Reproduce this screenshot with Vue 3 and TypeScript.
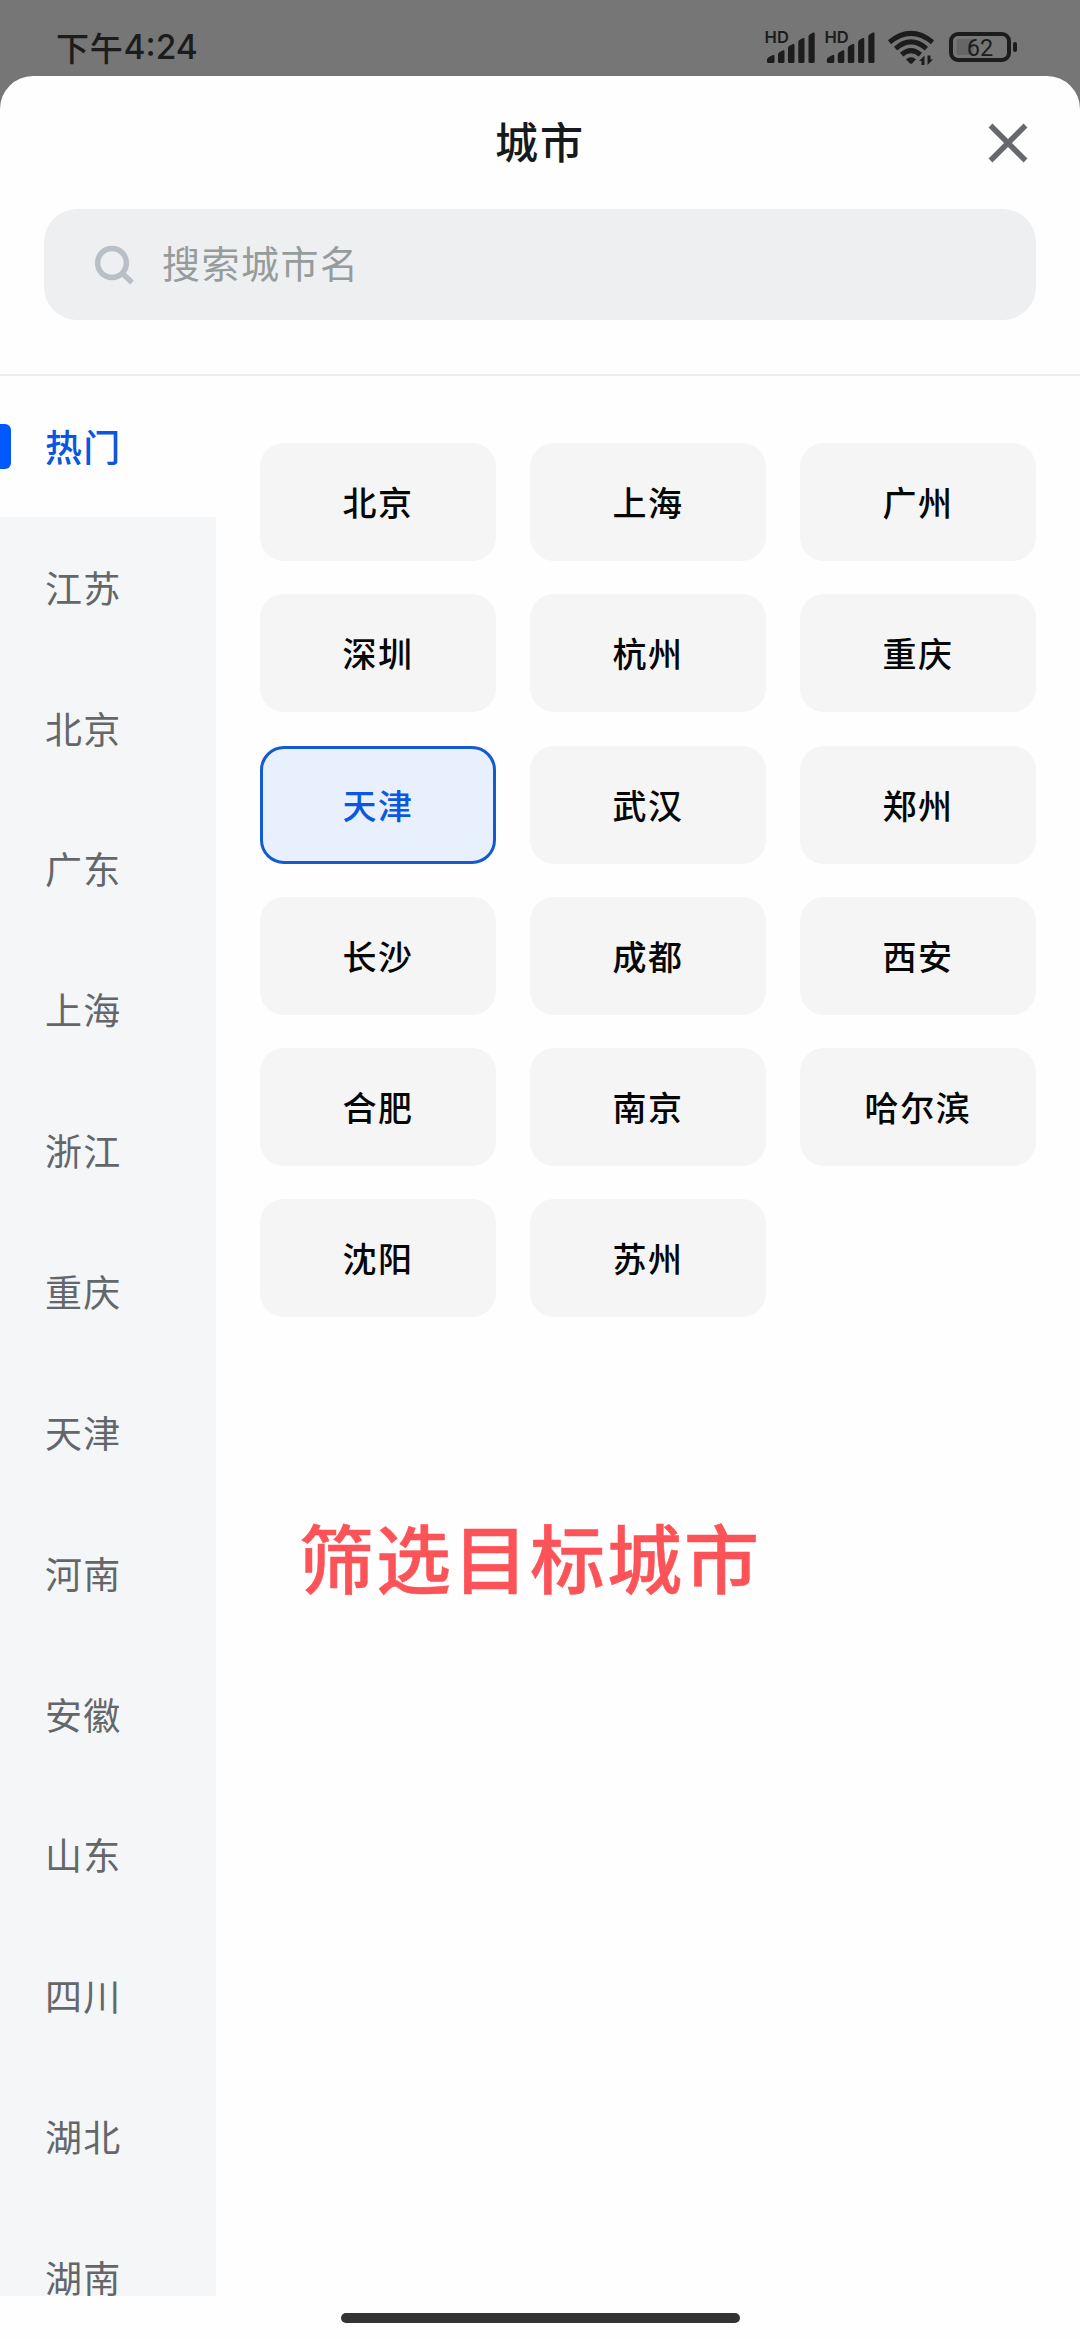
<script setup lang="ts">
import { ref } from 'vue'

const provinces: string[] = [
  '热门', '江苏', '北京', '广东', '上海', '浙江', '重庆',
  '天津', '河南', '安徽', '山东', '四川', '湖北', '湖南',
]
const cities: string[] = [
  '北京', '上海', '广州', '深圳', '杭州', '重庆', '天津', '武汉', '郑州',
  '长沙', '成都', '西安', '合肥', '南京', '哈尔滨', '沈阳', '苏州',
]
const activeProvince = ref('热门')
const activeCity = ref('天津')
</script>

<template>
  <div class="screen">
    <header class="status">
      <span class="time">下午<b>4:24</b></span>
      <svg class="indicators" width="260" height="48" viewBox="760 24 260 48">
        <g v-for="i in 2" :key="i" :transform="`translate(${(i - 1) * 59.8} 0)`">
          <text class="hd" x="764.6" y="42.8">HD</text>
          <path
            d="M767 60q0-2 2-3l4-2q1.500-.5 1.500 1v5.500q0 1.500-1.500 1.500h-4.500q-1.500 0-1.500-1.500z
               M778 54.500q0-1.500 1.500-2.200l3.500-2q1.500-.5 1.500 1v10.200q0 1.500-1.500 1.500h-3.500q-1.500 0-1.500-1.500z
               M788 48q0-1.500 1.500-2.200l3.500-1.800q1.500-.5 1.500 1v16.500q0 1.500-1.500 1.500h-3.500q-1.500 0-1.500-1.500z
               M798.300 42q0-1.500 1.500-2.200l3.200-1.700q1.500-.5 1.500 1v22.400q0 1.500-1.500 1.500h-3.200q-1.500 0-1.500-1.500z
               M808.500 36.500q0-1.500 1.500-2.200l3.200-1.700q1.500-.5 1.500 1v27.900q0 1.500-1.500 1.500h-3.200q-1.500 0-1.500-1.500z"
          />
        </g>
        <g class="arc">
          <path d="M889.500 42.200Q911 24.600 932.500 42.200" />
          <path d="M895.600 48.600Q911 35.300 926.400 48.600" />
          <path d="M901.600 54.600Q911 46.500 920.400 54.600" />
        </g>
        <path d="M906 59.200q5-4 10 0l-4 4.200q-1 .8-2 0z" />
        <path d="M919 61l5.500-5.500v9.500h-3v-4z M933 59.500l-5.500 5.500v-9.500h3v4z" />
        <rect x="956.500" y="39" width="17" height="16" rx="2" fill="#666" />
        <rect x="951" y="34" width="58" height="26" rx="7" fill="none" stroke="#1c1c1c" stroke-width="4" />
        <rect x="1013" y="42" width="4" height="10" rx="2" />
        <text class="level" x="980" y="55.800" text-anchor="middle">62</text>
      </svg>
    </header>

    <main class="sheet">
      <div class="titlebar">
        <h1>城市</h1>
        <svg class="close" width="40" height="40" viewBox="0 0 40 40">
          <path d="M2.500 2.500L37.500 37.500M37.500 2.500L2.500 37.500" />
        </svg>
      </div>

      <div class="search">
        <svg width="40" height="40" viewBox="0 0 40 40">
          <circle cx="18" cy="18" r="14.400" />
          <path d="M28.500 28.500L38 37.500" />
        </svg>
        <span>搜索城市名</span>
      </div>

      <div class="body">
        <nav class="side">
          <div
            v-for="p in provinces"
            :key="p"
            class="province"
            :class="{ active: p === activeProvince }"
            @click="activeProvince = p"
          >{{ p }}</div>
        </nav>
        <section class="content">
          <div class="grid">
            <div
              v-for="c in cities"
              :key="c"
              class="city"
              :class="{ active: c === activeCity }"
              @click="activeCity = c"
            >{{ c }}</div>
          </div>
          <p class="note">筛选目标城市</p>
        </section>
      </div>

      <footer class="home"><i></i></footer>
    </main>
  </div>
</template>

<style>
body {
  margin: 0;
}
</style>

<style scoped>
.screen {
  width: 1080px;
  height: 2340px;
  overflow: hidden;
  display: flex;
  flex-direction: column;
  background: #767676;
  font-family: "Noto Sans CJK SC", sans-serif;
}
.status {
  height: 76px;
  flex: none;
  box-sizing: border-box;
  padding: 24px 60px 0 56px;
  display: flex;
  justify-content: space-between;
  align-items: flex-start;
  color: #1c1c1c;
}
.time {
  display: flex;
  align-items: center;
  height: 46px;
  font-size: 33px;
  font-weight: 500;
  letter-spacing: 0.8px;
  line-height: 46px;
}
.time b {
  font-family: Inter, sans-serif;
  font-weight: 500;
  font-size: 33.500px;
  letter-spacing: 0;
}
.indicators {
  fill: #1c1c1c;
}
.hd {
  font: 600 16.500px Inter, sans-serif;
}
.level {
  font: 400 23.500px Roboto, sans-serif;
}
.arc {
  fill: none;
  stroke: #1c1c1c;
  stroke-width: 5;
}
.sheet {
  flex: 1;
  min-height: 0;
  display: flex;
  flex-direction: column;
  background: #fefefe;
  border-radius: 33px 33px 0 0;
}
.titlebar {
  height: 133px;
  flex: none;
  display: grid;
  grid-template-columns: 1fr auto 1fr;
  align-items: center;
}
h1 {
  grid-column: 2;
  margin: 0 0 6px;
  font-size: 43px;
  line-height: 60px;
  font-weight: 500;
  letter-spacing: 2px;
  color: #161a1a;
}
.close {
  justify-self: end;
  margin: 0 52px 0 0;
  fill: none;
  stroke: #66686b;
  stroke-width: 5.500;
}
.search {
  height: 111px;
  flex: none;
  margin: 0 44px 54px;
  padding-left: 50px;
  box-sizing: border-box;
  display: flex;
  align-items: center;
  gap: 28px;
  border-radius: 33px;
  background: #edeff1;
  color: #969b9c;
  font-size: 38px;
  letter-spacing: 1.500px;
}
.search span {
  padding-bottom: 6px;
}
.search svg {
  fill: none;
  stroke: #b9bfc6;
  stroke-width: 5.500;
}
.body {
  height: 1920px;
  flex: none;
  display: flex;
  border-top: 2px solid #ebedee;
}
.side {
  width: 216px;
  overflow: hidden;
}
.province {
  position: relative;
  height: 140.850px;
  display: flex;
  align-items: center;
  padding: 0 0 1px 45px;
  box-sizing: border-box;
  background: #f4f6f8;
  color: #64676a;
  font-size: 37px;
  letter-spacing: 1.300px;
}
.province.active {
  background: #fefefe;
  color: #0957e0;
  font-weight: 500;
}
.province.active::before {
  content: "";
  position: absolute;
  left: 0;
  top: 48px;
  width: 11px;
  height: 45px;
  border-radius: 0 6px 6px 0;
  background: #0058ff;
}
.content {
  flex: 1;
  padding: 67px 44px 0;
}
.grid {
  display: grid;
  grid-template-columns: repeat(3, 236px);
  grid-auto-rows: 118px;
  justify-content: space-between;
  row-gap: 33.300px;
}
.city {
  box-sizing: border-box;
  display: flex;
  align-items: center;
  justify-content: center;
  padding-bottom: 1px;
  border-radius: 24px;
  background: #f5f5f5;
  color: #060707;
  font-size: 34px;
  font-weight: 500;
  letter-spacing: 1.600px;
}
.city.active {
  border: 3px solid #135bcf;
  background: #e8f0fe;
  color: #0b58df;
}
.note {
  margin: 184px 0 0 39px;
  font-size: 75px;
  line-height: 110px;
  font-weight: 500;
  letter-spacing: 2px;
  color: #fb5358;
  -webkit-text-stroke: 0.5px currentColor;
}
.home {
  flex: 1;
  display: flex;
  justify-content: center;
  padding-top: 17px;
}
.home i {
  width: 399px;
  height: 10px;
  border-radius: 5px;
  background: #333;
}
</style>
